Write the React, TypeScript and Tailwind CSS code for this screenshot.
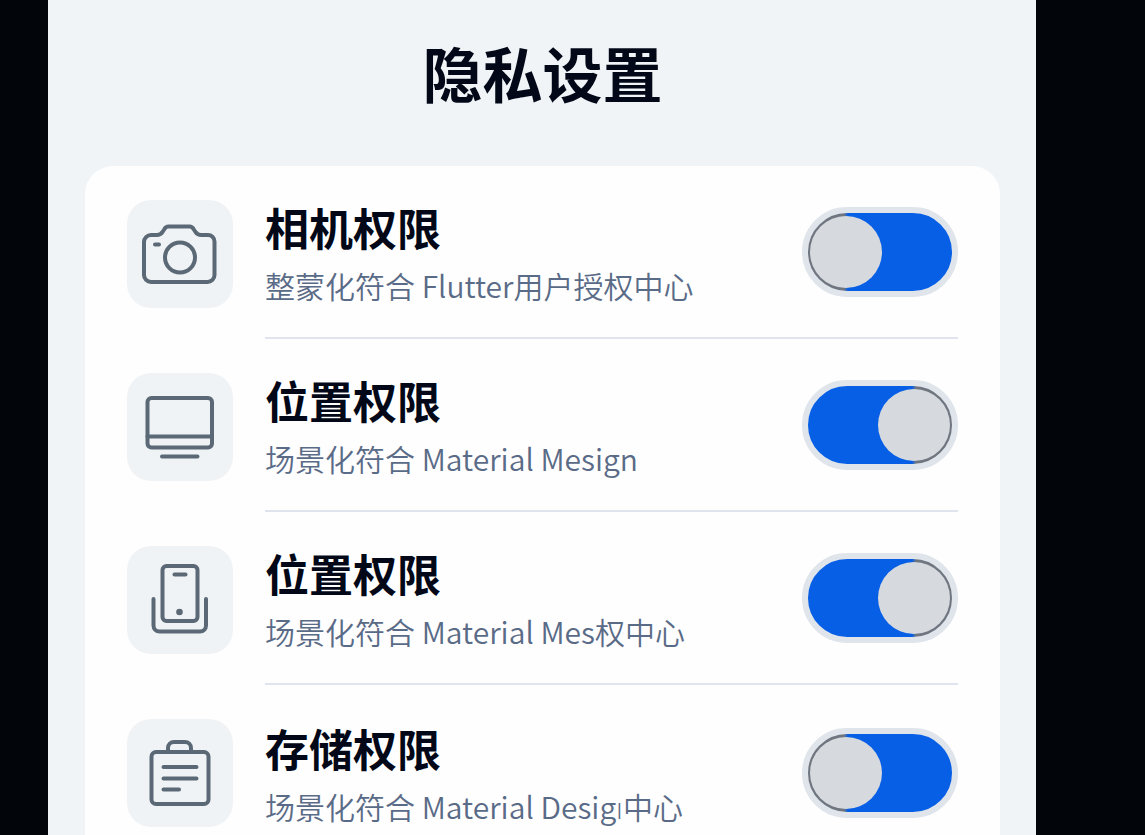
import React, { useState } from 'react';

interface Permission {
  id: string;
  title: string;
  description: string;
  icon: React.ReactNode;
  // which end of the track the thumb sits at
  thumbRight: boolean;
}

const CameraIcon = () => (
  <svg viewBox="0 0 106 108" className="h-full w-full" fill="none" stroke="currentColor" strokeWidth="4" strokeLinecap="round" strokeLinejoin="round" aria-hidden="true">
    <path d="M24 35h6c3 0 4-1 5.500-3l2-3c1-2 2-2.500 4-2.500h21c2 0 3 .5 4 2.500l2 3c1.500 2 2.500 3 5.500 3h7a6.500 6.500 0 0 1 6.500 6.500V75a7 7 0 0 1-7 7H24a7 7 0 0 1-7-7V42a7 7 0 0 1 7-7z" />
    <circle cx="53" cy="57.500" r="15" />
    <path d="M28 44.500h4" />
  </svg>
);

const MonitorIcon = () => (
  <svg viewBox="0 0 106 108" className="h-full w-full" fill="none" stroke="currentColor" strokeWidth="4" strokeLinecap="round" strokeLinejoin="round" aria-hidden="true">
    <rect x="20.500" y="25" width="64.500" height="49.500" rx="4" />
    <path d="M20.500 63.500H85M35 83.500h35.500" />
  </svg>
);

const PhoneIcon = () => (
  <svg viewBox="0 0 106 108" className="h-full w-full" fill="none" stroke="currentColor" strokeWidth="4" strokeLinecap="round" strokeLinejoin="round" aria-hidden="true">
    <rect x="35.500" y="20" width="35" height="55" rx="4" />
    <path d="M47.500 28.500h11" />
    <circle cx="52.500" cy="66" r="3.300" fill="currentColor" stroke="none" />
    <path d="M26.500 53v26.500a6 6 0 0 0 6 6H73a6 6 0 0 0 6-6V53" />
  </svg>
);

const ClipboardIcon = () => (
  <svg viewBox="0 0 106 108" className="h-full w-full" fill="none" stroke="currentColor" strokeWidth="4" strokeLinecap="round" strokeLinejoin="round" aria-hidden="true">
    <rect x="24.500" y="33" width="57" height="52" rx="4.500" />
    <path d="M41 33v-4a6 6 0 0 1 6-6h11a6 6 0 0 1 6 6v4" />
    <path d="M36.500 48h33M36.500 59.500h33M36.500 70.500h15.500" />
  </svg>
);

const permissions: Permission[] = [
  { id: 'camera', title: '相机权限', description: '整蒙化符合 Flutter用户授权中心', icon: <CameraIcon />, thumbRight: false },
  { id: 'location', title: '位置权限', description: '场景化符合 Material Mesign', icon: <MonitorIcon />, thumbRight: true },
  { id: 'device', title: '位置权限', description: '场景化符合 Material Mes权中心', icon: <PhoneIcon />, thumbRight: true },
  { id: 'storage', title: '存储权限', description: '场景化符合 Material Desigı中心', icon: <ClipboardIcon />, thumbRight: false },
];

interface PermissionRowProps {
  permission: Permission;
  checked: boolean;
  onChange: (checked: boolean) => void;
}

const PermissionRow: React.FC<PermissionRowProps> = ({ permission, checked, onChange }) => (
  <li className="group flex gap-8">
    <div className="mt-[34px] h-[108px] w-[106px] shrink-0 rounded-3xl bg-[#f0f3f6] text-[#5b6876]">
      {permission.icon}
    </div>
    <div className="flex min-w-0 flex-1 items-center justify-between gap-4 border-b-2 border-[#dfe4ee] pt-[33px] pb-8 group-last:border-b-0 group-last:pb-0">
      <label htmlFor={permission.id} className="block">
        <span className="block text-[44px] leading-[56px] font-bold text-[#020817]">{permission.title}</span>
        <span className="mt-2.5 block text-[30px] leading-[40px] font-[350] text-[#5a6b87]">{permission.description}</span>
      </label>
      <input
        id={permission.id}
        type="checkbox"
        role="switch"
        checked={checked}
        onChange={(e) => onChange(e.target.checked)}
        className="flex h-[90px] w-[156px] shrink-0 cursor-pointer appearance-none items-center rounded-full border-6 border-[#dfe5eb] bg-[linear-gradient(to_right,#6f7680_36px,#075fe6_40px)] px-0.5 before:size-[72px] before:rounded-full before:bg-[#d6d9de] checked:justify-end checked:bg-[linear-gradient(to_left,#6f7680_36px,#075fe6_40px)]"
      />
    </div>
  </li>
);

const App: React.FC = () => {
  const [enabled, setEnabled] = useState<Record<string, boolean>>(
    Object.fromEntries(permissions.map((p) => [p.id, p.thumbRight]))
  );

  return (
    <div className="flex min-h-screen bg-[#020509] pr-[109px] pl-12 font-['Noto_Sans_CJK_SC','Open_Sans',sans-serif]">
      <main className="flex flex-1 flex-col bg-[#f0f4f7] pr-9 pl-[37px]">
        <h1 className="pt-8 pb-[54px] text-center text-[60px] leading-[80px] font-bold text-[#020817]">隐私设置</h1>
        <ul className="flex-1 rounded-t-[28px] bg-[#fefefe] px-[42px]">
          {permissions.map((p) => (
            <PermissionRow
              key={p.id}
              permission={p}
              checked={enabled[p.id]}
              onChange={(checked) => setEnabled({ ...enabled, [p.id]: checked })}
            />
          ))}
        </ul>
      </main>
    </div>
  );
};

export default App;
